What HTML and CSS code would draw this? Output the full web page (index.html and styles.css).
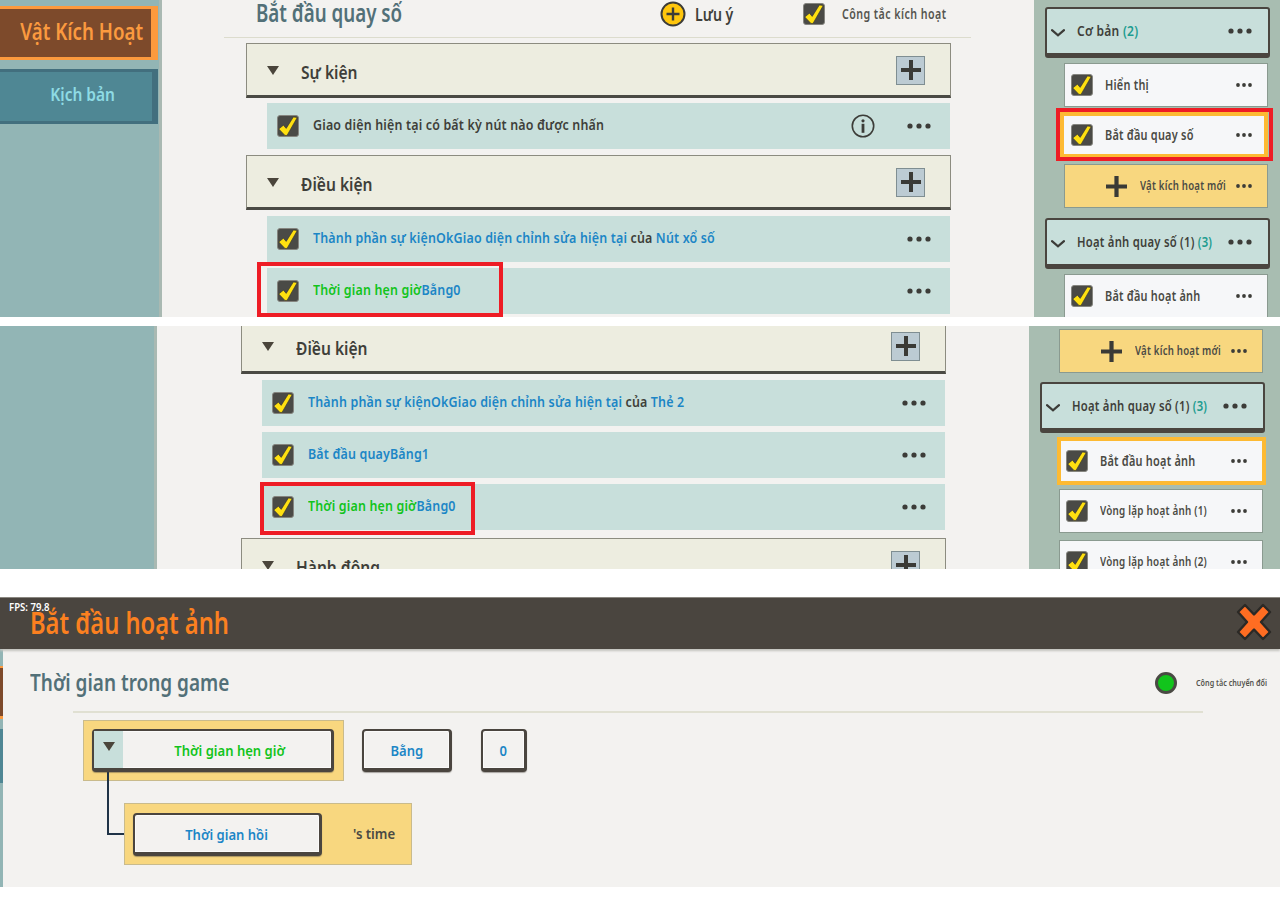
FILE: index.html
```html
<!DOCTYPE html>
<html lang="vi">
<head>
<meta charset="utf-8">
<title>Vật Kích Hoạt</title>
<link rel="stylesheet" href="styles.css">
</head>
<body>
<svg class="defs" width="0" height="0">
  <symbol id="check" viewBox="0 0 22 22">
    <rect x="0.5" y="0.5" width="21" height="21" rx="2.5" fill="#4a4a46" stroke="#85857f"/>
    <path d="M1.8 14 L6.4 10.2 L9.2 13.4 L16.4 2 L20.2 2.6 L10 20.4 L8 20.4 Z" fill="#ffe010" stroke="#33332f" stroke-width=".6" stroke-linejoin="round"/>
  </symbol>
  <symbol id="dots" viewBox="0 0 24 6">
    <circle cx="3" cy="3" r="2.6" fill="#3c3c38"/><circle cx="12" cy="3" r="2.6" fill="#3c3c38"/><circle cx="21" cy="3" r="2.6" fill="#3c3c38"/>
  </symbol>
  <symbol id="sdots" viewBox="0 0 16 4">
    <circle cx="2" cy="2" r="1.9" fill="#3c3c38"/><circle cx="8" cy="2" r="1.9" fill="#3c3c38"/><circle cx="14" cy="2" r="1.9" fill="#3c3c38"/>
  </symbol>
  <symbol id="plus" viewBox="0 0 20 20">
    <path d="M8 0h4v8h8v4h-8v8H8v-8H0V8h8z" fill="#3a3a36"/>
  </symbol>
  <symbol id="chev" viewBox="0 0 14 8">
    <path d="M1 1.2 L7 6.4 L13 1.2" fill="none" stroke="#3c3c38" stroke-width="2.2" stroke-linecap="round"/>
  </symbol>
  <symbol id="tri" viewBox="0 0 12 9">
    <path d="M0 0H12L6 9Z" fill="#4a453b"/>
  </symbol>
</svg>

<section class="panel panel-a">
  <aside class="side">
    <div class="tab tab-on"><span class="tab-label">Vật Kích Hoạt</span></div>
    <div class="tab tab-off"><span class="tab-label">Kịch bản</span></div>
  </aside>
  <main class="main">
    <div class="head">
      <h2 class="head-title">Bắt đầu quay số</h2>
      <div class="note">
        <svg class="note-ico" viewBox="0 0 26 26"><circle cx="13" cy="13" r="11.5" fill="#ffc60c" stroke="#3c3c38" stroke-width="2"/><path d="M11.8 6.5h2.4v5.3h5.3v2.4h-5.3v5.3h-2.4v-5.3H6.5v-2.4h5.3z" fill="#3c3c38"/></svg>
        <span class="note-text">Lưu ý</span>
      </div>
      <div class="switch">
        <svg class="chk"><use href="#check"/></svg>
        <span class="switch-text">Công tắc kích hoạt</span>
      </div>
    </div>
    <div class="sec">
      <svg class="tri"><use href="#tri"/></svg><span class="sec-name">Sự kiện</span>
      <span class="plusbtn"><svg class="plus"><use href="#plus"/></svg></span>
    </div>
    <div class="row">
      <svg class="chk"><use href="#check"/></svg>
      <span class="row-text dark">Giao diện hiện tại có bất kỳ nút nào được nhấn</span>
      <svg class="info" viewBox="0 0 24 24"><circle cx="12" cy="12" r="10.7" fill="none" stroke="#3c3c38" stroke-width="1.6"/><circle cx="12" cy="6.8" r="1.6" fill="#3c3c38"/><rect x="10.6" y="9.8" width="2.8" height="9" fill="#3c3c38"/></svg>
      <svg class="dots"><use href="#dots"/></svg>
    </div>
    <div class="sec">
      <svg class="tri"><use href="#tri"/></svg><span class="sec-name">Điều kiện</span>
      <span class="plusbtn"><svg class="plus"><use href="#plus"/></svg></span>
    </div>
    <div class="row">
      <svg class="chk"><use href="#check"/></svg>
      <span class="row-text blue">Thành phần sự kiệnOkGiao diện chỉnh sửa hiện tại <span class="dark">của</span> Nút xổ số</span>
      <svg class="dots"><use href="#dots"/></svg>
    </div>
    <div class="row">
      <svg class="chk"><use href="#check"/></svg>
      <span class="row-text blue"><span class="green">Thời gian hẹn giờ</span>Bằng0</span>
      <svg class="dots"><use href="#dots"/></svg>
      <span class="mark mark-a"></span>
    </div>
  </main>
  <aside class="right">
    <div class="group">
      <svg class="chev"><use href="#chev"/></svg>
      <span class="group-name">Cơ bản <span class="teal">(2)</span></span>
      <svg class="dots"><use href="#dots"/></svg>
    </div>
    <div class="item">
      <svg class="chk"><use href="#check"/></svg><span class="item-name">Hiển thị</span>
      <svg class="sdots"><use href="#sdots"/></svg>
    </div>
    <div class="item item-sel">
      <svg class="chk"><use href="#check"/></svg><span class="item-name">Bắt đầu quay số</span>
      <svg class="sdots"><use href="#sdots"/></svg>
      <span class="mark mark-c"></span>
    </div>
    <div class="item item-new">
      <svg class="bigplus"><use href="#plus"/></svg><span class="new-name">Vật kích hoạt mới</span>
      <svg class="sdots"><use href="#sdots"/></svg>
    </div>
    <div class="group">
      <svg class="chev"><use href="#chev"/></svg>
      <span class="group-name group-long">Hoạt ảnh quay số (1) <span class="teal">(3)</span></span>
      <svg class="dots"><use href="#dots"/></svg>
    </div>
    <div class="item">
      <svg class="chk"><use href="#check"/></svg><span class="item-name">Bắt đầu hoạt ảnh</span>
      <svg class="sdots"><use href="#sdots"/></svg>
    </div>
  </aside>
</section>

<section class="panel panel-b">
  <aside class="side"></aside>
  <main class="main">
    <div class="sec sec-cut">
      <svg class="tri"><use href="#tri"/></svg><span class="sec-name">Điều kiện</span>
      <span class="plusbtn"><svg class="plus"><use href="#plus"/></svg></span>
    </div>
    <div class="row">
      <svg class="chk"><use href="#check"/></svg>
      <span class="row-text blue">Thành phần sự kiệnOkGiao diện chỉnh sửa hiện tại <span class="dark">của</span> Thẻ 2</span>
      <svg class="dots"><use href="#dots"/></svg>
    </div>
    <div class="row">
      <svg class="chk"><use href="#check"/></svg>
      <span class="row-text blue">Bắt đầu quayBằng1</span>
      <svg class="dots"><use href="#dots"/></svg>
    </div>
    <div class="row">
      <svg class="chk"><use href="#check"/></svg>
      <span class="row-text blue"><span class="green">Thời gian hẹn giờ</span>Bằng0</span>
      <svg class="dots"><use href="#dots"/></svg>
      <span class="mark mark-b"></span>
    </div>
    <div class="sec">
      <svg class="tri"><use href="#tri"/></svg><span class="sec-name">Hành động</span>
      <span class="plusbtn"><svg class="plus"><use href="#plus"/></svg></span>
    </div>
  </main>
  <aside class="right">
    <div class="item item-new">
      <svg class="bigplus"><use href="#plus"/></svg><span class="new-name">Vật kích hoạt mới</span>
      <svg class="sdots"><use href="#sdots"/></svg>
    </div>
    <div class="group">
      <svg class="chev"><use href="#chev"/></svg>
      <span class="group-name group-long">Hoạt ảnh quay số (1) <span class="teal">(3)</span></span>
      <svg class="dots"><use href="#dots"/></svg>
    </div>
    <div class="item item-sel">
      <svg class="chk"><use href="#check"/></svg><span class="item-name">Bắt đầu hoạt ảnh</span>
      <svg class="sdots"><use href="#sdots"/></svg>
    </div>
    <div class="item">
      <svg class="chk"><use href="#check"/></svg><span class="item-name small">Vòng lặp hoạt ảnh (1)</span>
      <svg class="sdots"><use href="#sdots"/></svg>
    </div>
    <div class="item">
      <svg class="chk"><use href="#check"/></svg><span class="item-name small">Vòng lặp hoạt ảnh (2)</span>
      <svg class="sdots"><use href="#sdots"/></svg>
    </div>
  </aside>
</section>

<section class="dialog">
  <header class="bar">
    <span class="fps">FPS: 79.8</span>
    <h1 class="bar-title">Bắt đầu hoạt ảnh</h1>
    <svg class="close" viewBox="0 0 36 38"><path d="M9 2 L18 11.5 L27 2 L34 9 L25 19 L34 29 L27 36 L18 26.5 L9 36 L2 29 L11 19 L2 9 Z" fill="#ff6d22" stroke="#2b2926" stroke-width="2.4" stroke-linejoin="round"/></svg>
  </header>
  <div class="body">
    <div class="body-head">
      <h2 class="body-title">Thời gian trong game</h2>
      <span class="led"></span>
      <span class="led-text">Công tắc chuyển đổi</span>
    </div>
    <div class="rule"></div>
    <div class="line-one">
      <div class="slot slot-one">
        <div class="btn btn-select"><span class="btn-drop"><svg class="tri"><use href="#tri"/></svg></span><span class="btn-label green">Thời gian hẹn giờ</span></div>
      </div>
      <div class="btn btn-eq"><span class="btn-label blue">Bằng</span></div>
      <div class="btn btn-zero"><span class="btn-label blue">0</span></div>
    </div>
    <div class="line-two">
      <span class="link"></span>
      <div class="slot slot-two">
        <div class="btn btn-cool"><span class="btn-label blue">Thời gian hồi</span></div>
        <span class="time">'s time</span>
      </div>
    </div>
  </div>
</section>
</body>
</html>
```
FILE: styles.css
```css
* { box-sizing: border-box; }
html, body { margin: 0; padding: 0; background: #fff; }
body {
  height: 908px;
  overflow: hidden;
  font-family: "Noto Sans", "Open Sans", sans-serif;
  font-weight: 600;
  color: #4a4a44;
}
h1, h2 { margin: 0; font-weight: 600; }
.defs { position: absolute; }
.dark { color: #3f3f3a; }
.blue { color: #1c86c6; }
.green { color: #12c41c; }
.teal { color: #1d9c90; }

/* the game's UI font is condensed: narrow the installed one */
.tab-label, .head-title, .note-text, .switch-text, .sec-name, .row-text,
.group-name, .item-name, .new-name, .fps, .bar-title, .body-title,
.led-text, .btn-label, .time {
  white-space: nowrap;
  transform-origin: left center;
}
.tab-label, .btn-label { transform-origin: center; flex: none; }

.panel { display: flex; overflow: hidden; }
.panel-a { height: 317px; }
.panel-b { height: 243px; margin-top: 9px; }

.side {
  flex: none;
  width: 162px;
  display: flex;
  flex-direction: column;
  gap: 9px;
  padding-top: 6px;
  background: #92b5b5;
  border-right: 3px solid #a9b9b2;
}
.panel-b .side { width: 157px; }
.tab {
  width: 158px;
  height: 54px;
  display: flex;
  align-items: center;
  justify-content: center;
}
.tab-on {
  padding: 0 0 5px 12px;
  font-size: 24px;
  color: #fb9a3f;
  background: #7d4a2b;
  border: solid #fc9a3e;
  border-width: 3px 7px 3px 0;
}
.tab-on .tab-label { transform: scaleX(.78); }
.tab-off {
  height: 55px;
  padding: 0 0 5px 13px;
  font-size: 18px;
  color: #8edbe4;
  background: #4f8794;
  border: solid #426f7e;
  border-width: 3px 6px 3px 0;
}
.tab-off .tab-label { transform: scaleX(.86); }

.main {
  flex: none;
  width: 872px;
  padding-left: 62px;
  background: #f3f2f0;
}
.head {
  width: 747px;
  height: 38px;
  display: flex;
  align-items: center;
  padding: 0 0 14px 32px;
  border-bottom: 1px solid #dcdccd;
}
.head-title {
  flex: 1;
  min-width: 0;
  font-size: 25px;
  color: #527078;
  transform: scaleX(.75);
}
.note {
  flex: none;
  display: flex;
  align-items: center;
  gap: 9px;
  width: 143px;
  padding-top: 6px;
  font-size: 17px;
  color: #3f3f3a;
}
.note-text { transform: scaleX(.83); }
.note-ico { width: 26px; height: 26px; flex: none; margin-top: -1px; }
.switch {
  flex: none;
  width: 168px;
  display: flex;
  align-items: center;
  gap: 17px;
  margin-top: 4px;
  font-size: 14px;
  letter-spacing: .6px;
  color: #55554f;
}
.switch-text { transform: scaleX(.76); }

.sec {
  display: flex;
  align-items: center;
  width: 705px;
  height: 55px;
  margin: 5px 0 5px 22px;
  padding: 0 25px 0 20px;
  background: #edede0;
  border: 1px solid #8c8c80;
  border-bottom: 3px solid #4a4a44;
}
.row + .sec { margin-bottom: 6px; }
.panel-b .row + .sec { margin-top: 8px; }
.sec-cut { margin: -7px 0 6px 22px; }
.tri { width: 12px; height: 9px; flex: none; margin-top: 1px; }
.sec-name {
  flex: 1;
  min-width: 0;
  margin-left: 22px;
  padding-top: 5px;
  font-size: 18px;
  color: #3f3f3a;
  transform: scaleX(.865);
}
.plusbtn {
  flex: none;
  width: 29px;
  height: 29px;
  margin-top: 1px;
  display: flex;
  align-items: center;
  justify-content: center;
  background: #bccbd3;
  border: 1px solid #7f8e92;
}
.plus { width: 20px; height: 20px; }

.row {
  position: relative;
  display: flex;
  align-items: center;
  width: 683px;
  height: 46px;
  margin: 0 0 6px 43px;
  padding: 0 19px 0 10px;
  background: #c8dfdb;
}
.chk { width: 22px; height: 22px; flex: none; }
.row-text {
  flex: 1;
  min-width: 0;
  margin-left: 13.5px;
  padding-bottom: 4px;
  font-size: 15px;
  letter-spacing: .2px;
  transform: scaleX(.83);
}
.info { width: 24px; height: 24px; flex: none; margin-right: 32px; }
.dots { width: 24px; height: 6px; flex: none; }

.mark {
  position: absolute;
  border: 4px solid #ee1c25;
  pointer-events: none;
}
.mark-a { left: -10px; top: -6px; width: 246px; height: 55px; }
.mark-b { left: -2px; top: -2px; width: 215px; height: 53px; }
.mark-c { left: -8px; top: -8px; width: 217px; height: 53px; }

.right {
  flex: 1;
  display: flex;
  flex-direction: column;
  align-items: flex-start;
  gap: 5px;
  padding: 7px 0 0 11px;
  background: #a8bdb1;
}
.panel-b .right { padding-top: 3px; }
.group {
  display: flex;
  align-items: center;
  flex: none;
  width: 225px;
  height: 51px;
  padding: 0 16px 0 4px;
  background: #c8dfdb;
  border: 2px solid #4a453f;
  border-bottom-width: 5px;
  border-radius: 3px;
}
.chev { width: 14px; height: 8px; flex: none; margin-top: 3px; }
.group-name {
  flex: 1;
  min-width: 0;
  margin-left: 12px;
  padding-bottom: 2px;
  font-size: 14px;
  letter-spacing: .3px;
  color: #3f3f3a;
  transform: scaleX(.86);
}
.group-long { transform: scaleX(.806); }
.item {
  position: relative;
  display: flex;
  align-items: center;
  flex: none;
  width: 204px;
  height: 44px;
  margin-left: 19px;
  padding: 0 15px 0 6px;
  background: #f6f7f9;
  border: 1px solid #8a9a90;
}
.item-name {
  flex: 1;
  min-width: 0;
  margin-left: 12px;
  padding-bottom: 2px;
  font-size: 14px;
  letter-spacing: .3px;
  color: #4a4a44;
  transform: scaleX(.78);
}
.small { font-size: 12px; transform: scaleX(.82); }
.sdots { width: 16px; height: 4px; flex: none; }
.item-sel {
  width: 208px;
  height: 46px;
  margin-left: 15px;
  padding: 0 12px 0 7px;
  border: 4px solid #fdba33;
}
.panel-b .item-sel {
  width: 209px;
  height: 48px;
  margin: -1px 0 -1px 17px;
  padding: 0 15px 0 5px;
}
.panel-b .item-sel + .item + .item { margin-top: 2px; }
.item-new {
  background: #f8d77f;
  margin-top: 1px;
  margin-bottom: 5px;
}
.panel-b .item-new { margin-top: 0; margin-bottom: 4px; }
.bigplus { width: 21px; height: 21px; margin-left: 35px; flex: none; }
.new-name {
  flex: 1;
  min-width: 0;
  margin-left: 13px;
  padding-bottom: 2px;
  font-size: 12px;
  letter-spacing: .3px;
  color: #4a4a44;
  transform: scaleX(.8);
}

.dialog { margin-top: 28px; height: 290px; }
.bar {
  position: relative;
  display: flex;
  align-items: center;
  height: 52px;
  padding: 0 8px 0 30px;
  background: #4a453f;
  border-top: 1px solid #8a8780;
  box-shadow: 0 2px 2px #c4c4bf;
}
.fps {
  position: absolute;
  left: 9px;
  top: 1px;
  font-size: 11px;
  color: #fff;
  transform: scaleX(.87);
}
.bar-title {
  flex: 1;
  min-width: 0;
  padding-bottom: 3px;
  font-size: 30px;
  color: #fb8020;
  transform: scaleX(.79);
}
.close { width: 36px; height: 38px; flex: none; margin-bottom: 4px; }
.body {
  height: 238px;
  padding: 0 0 0 33px;
  background:
    linear-gradient(to bottom,
      #92b5b5 0 17px, #fc9a3e 17px 19px, #7d4a2b 19px 67px, #fc9a3e 67px 70px,
      #92b5b5 70px 80px, #4f8794 80px 134px, #92b5b5 134px) 0 0 / 3px 100% no-repeat,
    #f3f2f0;
}
.body-head {
  display: flex;
  align-items: center;
  height: 62px;
  padding: 2px 13px 0 0;
}
.body-title {
  flex: 1;
  min-width: 0;
  margin-left: -3px;
  font-size: 24px;
  color: #527078;
  transform: scaleX(.79);
}
.led {
  flex: none;
  width: 22px;
  height: 22px;
  margin: 4px 19px 0 0;
  border-radius: 50%;
  background: #12c41c;
  border: 3px solid #4a4a44;
}
.led-text {
  flex: none;
  width: 71px;
  margin-top: 2px;
  font-size: 9px;
  color: #55554f;
  transform: scaleX(.8);
}
.rule {
  width: 1130px;
  margin-left: 40px;
  height: 2px;
  background: #e0e0d2;
}
.line-one {
  display: flex;
  align-items: flex-start;
  margin: 7px 0 0 50px;
}
.slot {
  display: flex;
  align-items: flex-start;
  background: #f8d77f;
  border: 1px solid #c9bb8c;
}
.slot-one { width: 261px; height: 61px; padding: 8px; }
.slot-two { width: 288px; height: 62px; padding: 9px 8px; }
.btn {
  flex: none;
  display: flex;
  align-items: center;
  justify-content: center;
  height: 43px;
  font-size: 15px;
  background: #f3f2f0;
  border: 2px solid #4a453f;
  border-right-width: 3px;
  border-bottom-width: 4px;
  border-radius: 4px;
  box-shadow: inset 0 0 0 1px #fbfbfa, 0 1px 1px rgba(74, 69, 63, .45);
}
.btn-label { transform: scaleX(.87); }
.btn-select { position: relative; width: 242px; padding-left: 35px; }
.btn-drop {
  position: absolute;
  left: 0;
  top: 0;
  bottom: 0;
  width: 29px;
  display: flex;
  align-items: center;
  justify-content: center;
  background: #c8dfdb;
}
.btn-drop .tri { margin-top: -7px; }
.btn-eq { width: 90px; margin: 9px 0 0 18px; }
.btn-zero { width: 46px; margin: 9px 0 0 29px; }
.line-two {
  display: flex;
  margin: 22px 0 0 74px;
}
.link {
  flex: none;
  width: 17px;
  height: 63px;
  margin-top: -31px;
  border: solid #1f3347;
  border-width: 0 0 2px 2px;
}
.btn-cool { width: 189px; }
.time {
  margin: 10px 0 0 31px;
  font-size: 15px;
  color: #4a4a44;
  transform: scaleX(.875);
}
```
